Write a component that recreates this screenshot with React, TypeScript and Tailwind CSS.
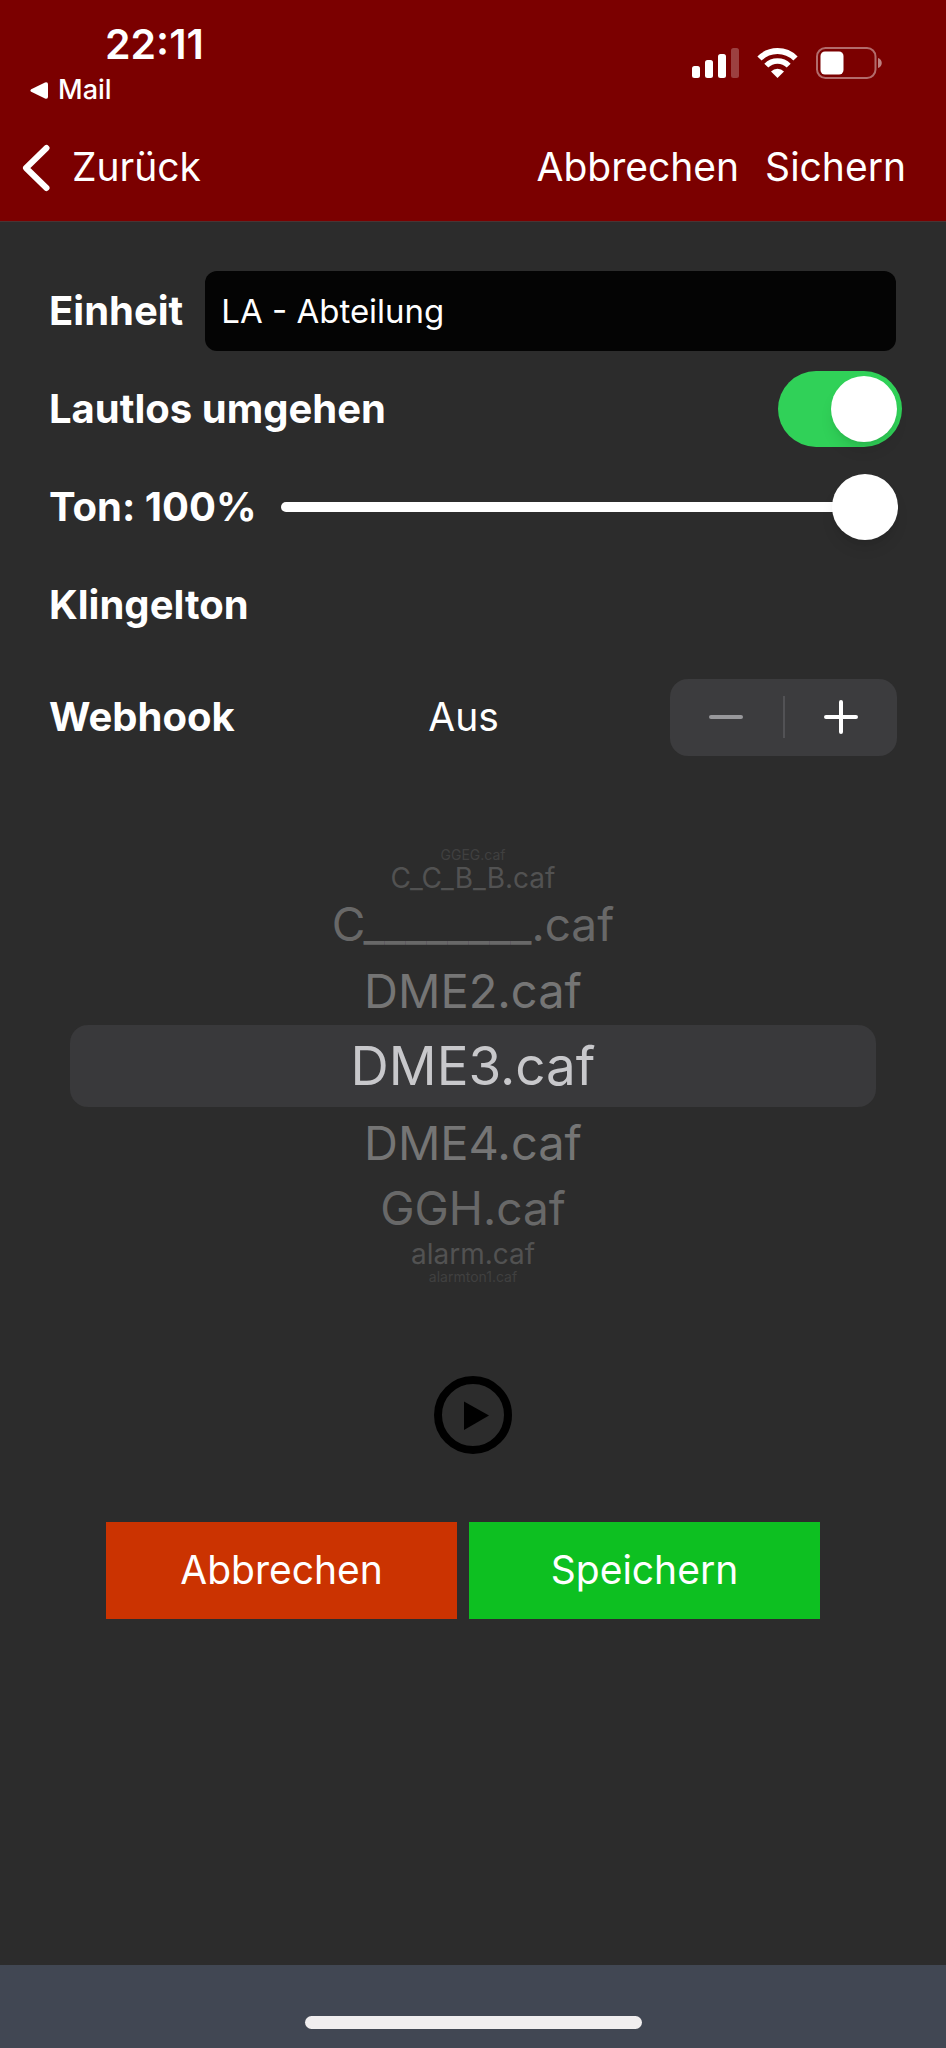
import { useState } from 'react';

const ringtones = [
  { name: 'GGEG.caf', row: 'h-4 text-[14px] text-[#404040]' },
  { name: 'C_C_B_B.caf', row: 'h-[30px] text-[28px] text-[#525252]' },
  { name: 'C________.caf', row: 'h-[62px] text-[46px] text-[#686868]' },
  { name: 'DME2.caf', row: 'h-[70px] text-[47px] text-[#757575]' },
  { name: 'DME3.caf', row: 'h-[82px] text-[53px] text-[#c8c8cb]' },
  { name: 'DME4.caf', row: 'h-[70px] text-[47px] text-[#757575]' },
  { name: 'GGH.caf', row: 'h-[62px] text-[46px] text-[#686868]' },
  { name: 'alarm.caf', row: 'h-[30px] text-[28px] text-[#525252]' },
  { name: 'alarmton1.caf', row: 'h-4 text-[14px] text-[#404040]' },
];

const StatusIcons = () => (
  <div className="flex items-center gap-[18px]">
    <svg width="47" height="30" viewBox="0 0 47 30" fill="white" aria-hidden="true">
      <rect x="0" y="18" width="8" height="12" rx="2.5" />
      <rect x="13" y="12" width="8" height="18" rx="2.5" />
      <rect x="26" y="6" width="8" height="24" rx="2.5" />
      <rect x="39" y="0" width="8" height="30" rx="2.5" opacity="0.25" />
    </svg>
    <svg width="41" height="30" viewBox="0 0 41 30" aria-hidden="true">
      <path d="M2.5 10.5 A25.5 25.5 0 0 1 38.5 10.5" fill="none" stroke="white" strokeWidth="6" />
      <path d="M9.3 17.6 A15.8 15.8 0 0 1 31.7 17.6" fill="none" stroke="white" strokeWidth="5.6" />
      <path d="M20.5 30 L14 23.5 A9.2 9.2 0 0 1 27 23.5 Z" fill="white" />
    </svg>
    <svg width="66" height="32" viewBox="0 0 66 32" aria-hidden="true">
      <rect x="1" y="1" width="58.5" height="30" rx="8.5" fill="none" stroke="white" strokeOpacity="0.42" strokeWidth="2" />
      <rect x="4.5" y="4.5" width="23" height="23" rx="4.5" fill="white" />
      <path d="M62 11 C67 12.5 67 19.5 62 21 Z" fill="white" fillOpacity="0.5" />
    </svg>
  </div>
);

const Header = () => (
  <header className="border-b border-[#4a3434] bg-[#7b0000]">
    <div className="flex h-[114px] items-center justify-between pl-[30px] pr-16">
      <div className="flex flex-col pt-[22px]">
        <span className="pl-[75px] text-[41px] leading-[44px] font-semibold">22:11</span>
        <a href="#mail" className="flex items-center gap-2.5 text-[27px] leading-[48px] font-medium">
          <svg width="18" height="17" viewBox="0 0 18 17" fill="white" aria-hidden="true">
            <path d="M1.2 7.2 L15 0.4 Q18 -0.4 18 2.2 V14.8 Q18 17.4 15 16.6 L1.2 9.8 Q-0.4 8.5 1.2 7.2 Z" />
          </svg>
          Mail
        </a>
      </div>
      <div className="pt-3">
        <StatusIcons />
      </div>
    </div>
    <nav className="flex h-[107px] items-center justify-between pl-5 pr-10 text-[39px]">
      <a href="#back" className="flex items-center gap-5">
        <svg width="32" height="48" viewBox="0 0 32 48" fill="none" stroke="white" strokeWidth="6" strokeLinecap="round" strokeLinejoin="round" aria-hidden="true">
          <path d="M26.5 4 L6 24 L26.5 44" />
        </svg>
        Zurück
      </a>
      <div className="flex gap-[26px]">
        <button type="button">Abbrechen</button>
        <button type="button">Sichern</button>
      </div>
    </nav>
  </header>
);

const App = () => {
  const [unit, setUnit] = useState('LA - Abteilung');
  const [bypass, setBypass] = useState(true);
  const [volume, setVolume] = useState(100);
  const [webhook, setWebhook] = useState(0);
  const [selected, setSelected] = useState('DME3.caf');

  return (
    <div className="flex min-h-screen flex-col bg-[#2c2c2c] font-['Inter',sans-serif] text-white">
      <Header />
      <main className="flex grow flex-col">
        <div className="flex flex-col gap-[18px] pt-[49px] text-[40px]">
          <div className="flex h-20 items-center gap-[22px] pl-[49px] pr-[50px]">
            <label htmlFor="unit" className="font-bold">Einheit</label>
            <input
              id="unit"
              type="text"
              value={unit}
              onChange={e => setUnit(e.target.value)}
              className="h-full min-w-0 grow rounded-xl bg-[#040404] px-4 text-[33px] outline-none"
            />
          </div>
          <div className="flex h-20 items-center justify-between pl-[49px] pr-11">
            <label htmlFor="bypass" className="font-bold">Lautlos umgehen</label>
            <input
              id="bypass"
              type="checkbox"
              checked={bypass}
              onChange={e => setBypass(e.target.checked)}
              className="flex h-[76px] w-[124px] appearance-none items-center rounded-full bg-[#39393d] px-[5px] before:size-[66px] before:rounded-full before:bg-white before:shadow-lg checked:justify-end checked:bg-[#30d158]"
            />
          </div>
          <div className="flex h-20 items-center gap-6 pl-[49px] pr-12">
            <label htmlFor="volume" className="font-bold">Ton: {volume}%</label>
            <input
              id="volume"
              type="range"
              min={0}
              max={100}
              value={volume}
              onChange={e => setVolume(Number(e.target.value))}
              className="h-2.5 min-w-0 grow appearance-none rounded-full bg-white [&::-webkit-slider-thumb]:size-[66px] [&::-webkit-slider-thumb]:appearance-none [&::-webkit-slider-thumb]:rounded-full [&::-webkit-slider-thumb]:bg-white [&::-webkit-slider-thumb]:shadow-lg"
            />
          </div>
          <h2 className="flex h-20 items-center pl-[49px] font-bold">Klingelton</h2>
          <div className="mt-3.5 grid h-20 grid-cols-[208px_1fr_227px] items-center pl-[49px] pr-[49px]">
            <span className="font-bold">Webhook</span>
            <output className="text-center text-[39px]">{webhook === 0 ? 'Aus' : webhook}</output>
            <div className="flex h-[77px] items-center rounded-[18px] bg-[#3c3c3e]">
              <button
                type="button"
                aria-label="Weniger"
                onClick={() => setWebhook(Math.max(0, webhook - 1))}
                className="flex h-full flex-1 items-center justify-center"
              >
                <svg width="34" height="34" viewBox="0 0 34 34" stroke="#98989b" strokeWidth="4" strokeLinecap="round" aria-hidden="true">
                  <path d="M2 17 H32" />
                </svg>
              </button>
              <span className="h-[42px] w-0.5 bg-[#525255]" />
              <button
                type="button"
                aria-label="Mehr"
                onClick={() => setWebhook(webhook + 1)}
                className="flex h-full flex-1 items-center justify-center"
              >
                <svg width="34" height="34" viewBox="0 0 34 34" stroke="white" strokeWidth="4" strokeLinecap="round" aria-hidden="true">
                  <path d="M2 17 H32 M17 2 V32" />
                </svg>
              </button>
            </div>
          </div>
        </div>

        <div role="listbox" aria-label="Klingelton" className="mt-[90px] flex flex-col px-[70px]">
          {ringtones.map(tone => (
            <button
              key={tone.name}
              type="button"
              role="option"
              aria-selected={tone.name === selected}
              onClick={() => setSelected(tone.name)}
              className={`flex items-center justify-center leading-none aria-selected:rounded-[18px] aria-selected:bg-[#39393b] ${tone.row}`}
            >
              {tone.name}
            </button>
          ))}
        </div>

        <button type="button" aria-label="Abspielen" className="mt-[91px] self-center">
          <svg width="78" height="78" viewBox="0 0 78 78" aria-hidden="true">
            <circle cx="39" cy="39" r="35" fill="none" stroke="black" strokeWidth="8" />
            <path d="M30 25.5 L55 39.5 L30 54 Z" fill="black" />
          </svg>
        </button>

        <div className="mt-[68px] grid grid-cols-2 gap-3 pl-[106px] pr-[126px] text-[39px]">
          <button type="button" className="h-[97px] bg-[#cb3301]">Abbrechen</button>
          <button type="button" className="h-[97px] bg-[#0dc021]">Speichern</button>
        </div>
      </main>
      <footer className="flex h-[83px] items-end justify-center bg-[#414753] pb-[19px]">
        <div className="h-[13px] w-[337px] rounded-full bg-[#f0eeef]" />
      </footer>
    </div>
  );
};

export default App;
